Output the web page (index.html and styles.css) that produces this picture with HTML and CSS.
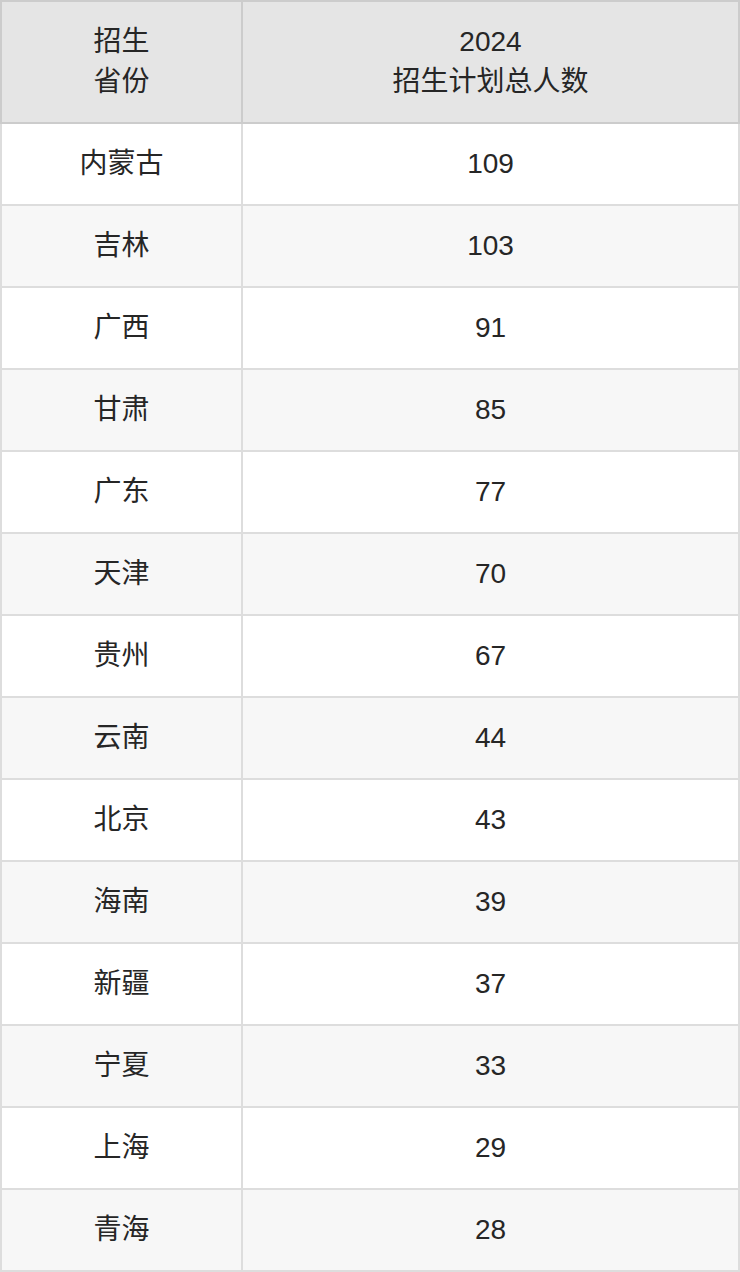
FILE: index.html
```html
<!DOCTYPE html>
<html lang="zh-CN">
<head>
<meta charset="utf-8">
<title>招生计划</title>
<link rel="stylesheet" href="styles.css">
</head>
<body>
<table class="plan">
  <thead>
    <tr><th class="c1">招生<br>省份</th><th class="c2">2024<br>招生计划总人数</th></tr>
  </thead>
  <tbody>
    <tr><td>内蒙古</td><td>109</td></tr>
    <tr><td>吉林</td><td>103</td></tr>
    <tr><td>广西</td><td>91</td></tr>
    <tr><td>甘肃</td><td>85</td></tr>
    <tr><td>广东</td><td>77</td></tr>
    <tr><td>天津</td><td>70</td></tr>
    <tr><td>贵州</td><td>67</td></tr>
    <tr><td>云南</td><td>44</td></tr>
    <tr><td>北京</td><td>43</td></tr>
    <tr><td>海南</td><td>39</td></tr>
    <tr><td>新疆</td><td>37</td></tr>
    <tr><td>宁夏</td><td>33</td></tr>
    <tr><td>上海</td><td>29</td></tr>
    <tr><td>青海</td><td>28</td></tr>
  </tbody>
</table>
</body>
</html>
```
FILE: styles.css
```css
html, body {
  margin: 0;
  padding: 0;
  background: #ffffff;
}
.plan {
  width: 740px;
  border-collapse: collapse;
  table-layout: fixed;
  font-family: "Liberation Sans", "Noto Sans CJK SC", sans-serif;
  font-size: 28px;
  color: #262626;
}
.plan th, .plan td {
  text-align: center;
  vertical-align: middle;
  padding: 0;
  font-weight: normal;
}
.plan th {
  background: #e5e5e5;
  border: 2px solid #cccccc;
  height: 120px;
  line-height: 40px;
}
.plan td {
  border: 2px solid #dddddd;
  height: 80px;
  line-height: 40px;
}
.plan .c1 { width: 239px; }
.plan tbody tr:nth-child(even) td {
  background: #f7f7f7;
}
```
